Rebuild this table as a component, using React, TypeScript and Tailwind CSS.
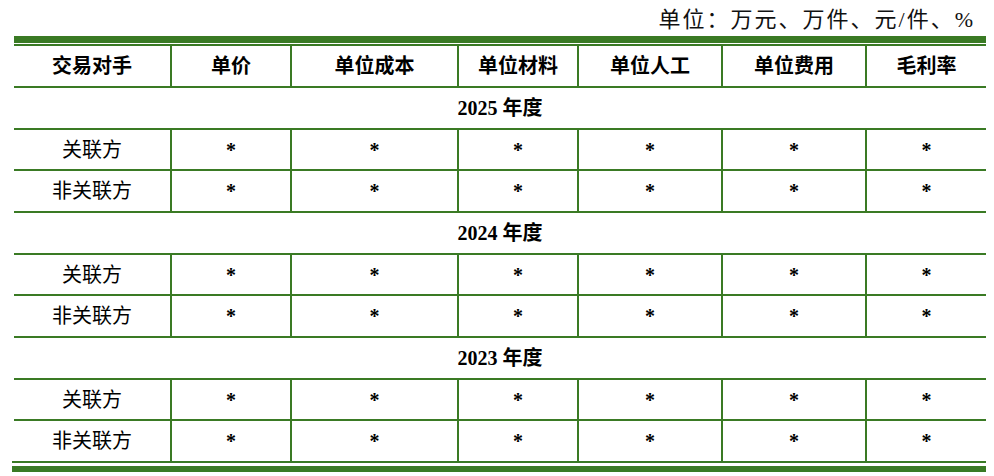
const cols = ["交易对手", "单价", "单位成本", "单位材料", "单位人工", "单位费用", "毛利率"];
const years = ["2025", "2024", "2023"];
const parties = ["关联方", "非关联方"];

const grid =
  "grid grid-cols-[156px_120px_167px_120px_144px_144px_121px] h-[41.7px] border-b-2 border-[#3a7a24]";
const font = { fontFamily: '"Liberation Serif", "Noto Sans CJK SC", serif' };

function Row({ cells, bold, last }: { cells: string[]; bold?: boolean; last?: boolean }) {
  return (
    <div
      className={
        last
          ? "grid grid-cols-[156px_120px_167px_120px_144px_144px_121px] h-[39.7px]"
          : grid
      }
    >
      {cells.map((c, i) => (
        <div
          key={i}
          className={
            "flex items-center justify-center text-[20px] text-black " +
            (i > 0 ? "border-l-2 border-[#3a7a24] " : "") +
            (bold || i > 0 ? "font-bold" : "font-normal")
          }
        >
          {c}
        </div>
      ))}
    </div>
  );
}

export default function App() {
  return (
    <div className="w-[994px] h-[476px] bg-white" style={font}>
      <div className="h-[36px] flex items-center justify-end pr-[19px] pt-[2px] text-[22px] text-[#111] tracking-[2px]">
        单位：万元、万件、元/件、%
      </div>
      <div className="ml-[14px] w-[972px]">
        <div className="h-[6.5px] bg-[#3a7a24]" />
        <div className="h-[1.8px]" />
        <div className="border-t-2 border-[#3a7a24]">
          <Row cells={cols} bold />
          {years.map((y, yi) => (
            <div key={y}>
              <div className="h-[41.7px] border-b-2 border-[#3a7a24] flex items-center justify-center text-[20px] font-bold text-black">
                {y} 年度
              </div>
              {parties.map((p, pi) => (
                <Row
                  key={p}
                  cells={[p, "*", "*", "*", "*", "*", "*"]}
                  last={yi === years.length - 1 && pi === parties.length - 1}
                />
              ))}
            </div>
          ))}
        </div>
      </div>
      <div className="ml-[12px] w-[974px]">
        <div className="h-[2px] bg-[#3a7a24]" />
        <div className="h-[2.5px]" />
        <div className="h-[6.5px] bg-[#3a7a24]" />
      </div>
    </div>
  );
}
